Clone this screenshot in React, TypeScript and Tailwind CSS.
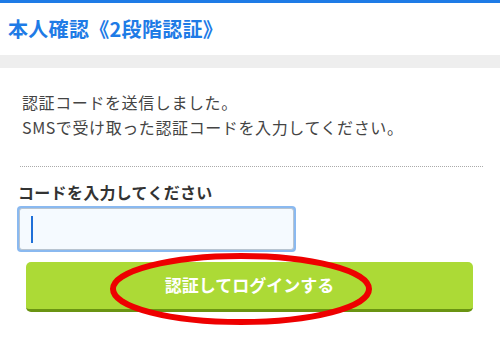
import React from 'react';

const jp = { fontFamily: '"Noto Sans CJK JP", "Noto Sans", sans-serif' };

export default function App() {
  return (
    <div className="w-[500px] h-[356px] bg-white overflow-hidden relative" style={jp}>
      {/* Header */}
      <div className="h-[3px] bg-[#1e7be6]" />
      <div className="h-[52px] flex items-center px-2">
        <h1 className="text-[20px] font-bold text-[#1e7be6] tracking-[0.3px]">本人確認《2段階認証》</h1>
      </div>
      <div className="h-[13px] bg-[#eeeeee]" />

      {/* Message */}
      <div className="pt-[22px] px-[22px] text-[16px] leading-[25px] text-[#444444] tracking-[0.6px]">
        <p>認証コードを送信しました。</p>
        <p>SMSで受け取った認証コードを入力してください。</p>
      </div>

      <div className="mx-[20px] mt-[26px] border-t border-dotted border-[#aaaaaa] w-[463px]" />

      {/* Form */}
      <div className="px-[17px] pt-[15px]">
        <label className="block pl-[1px] text-[16px] font-bold text-[#333333] leading-[21px] tracking-[0.3px]">
          コードを入力してください
        </label>
        <div className="mt-[3px] w-[279px] h-[46px] rounded-[4px] bg-[#8ab9f0] p-[2px]">
          <div className="h-full rounded-[3px] border border-[#b8c4d0] bg-[#f5faff] flex items-center pl-[11px]">
            <div className="w-[2px] h-[27px] bg-[#1e6fd8]" />
          </div>
        </div>
      </div>

      <div className="pl-[26px] pt-[10px]">
        <button className="w-[447px] h-[50px] rounded-[5px] bg-[#acda36] border-b-[3px] border-[#6a9412] text-white text-[17px] font-bold pb-[2px]">
          認証してログインする
        </button>
      </div>

      {/* Red annotation ellipse */}
      <svg className="absolute left-0 top-0 pointer-events-none" width="500" height="356">
        <ellipse cx="241" cy="289" rx="128" ry="33" fill="none" stroke="#ee0000" strokeWidth="6" />
      </svg>
    </div>
  );
}
